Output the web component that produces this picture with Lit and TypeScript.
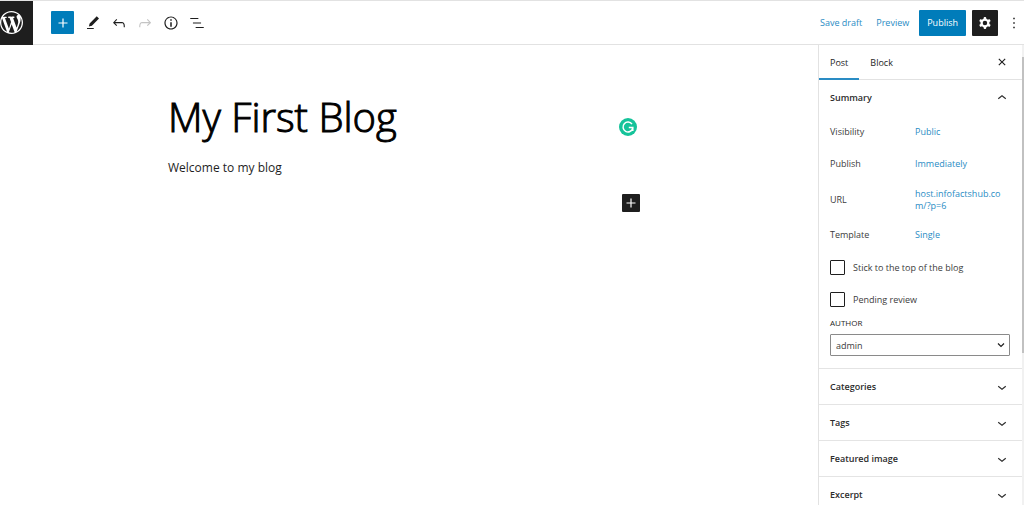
import { LitElement, html, css, svg } from "lit";
import { customElement, property, state } from "lit/decorators.js";

const ICONS: Record<string, string> = {
  plus: "M18 11.2h-5.2V6h-1.6v5.2H6v1.6h5.2V18h1.6v-5.2H18z",
  edit: "m20 6-3-3-9.500 9.500-1 4 4-1L20 6Zm-7 12.500H4V20h9v-1.500Z",
  undo: "M18.3 11.7c-.6-.6-1.4-.9-2.3-.9H6.7l2.900-3.300-1.100-1-4.500 5L8.5 16l1-1-2.700-2.700H16c.5 0 .9.2 1.3.5 1 1 1 3.400 1 4.500v.3h1.500v-.2c0-1.500 0-4.300-1.500-5.700z",
  redo: "M15.6 6.5l-1.100 1 2.900 3.300H8c-.9 0-1.700.3-2.300.9-1.400 1.500-1.400 4.200-1.400 5.600v.2h1.500v-.3c0-1.100 0-3.500 1-4.500.3-.3.7-.5 1.300-.5h9.200L14.5 15l1.100 1.100 4.600-4.600-4.600-5z",
  info: "M12 3.2c-4.800 0-8.800 3.900-8.800 8.800 0 4.800 3.900 8.800 8.800 8.800 4.800 0 8.800-3.900 8.800-8.800 0-4.800-4-8.800-8.800-8.800zm0 16c-4 0-7.200-3.300-7.200-7.200C4.8 8 8 4.8 12 4.8s7.200 3.300 7.200 7.200c0 4-3.200 7.200-7.200 7.200zM11 17h2v-6h-2v6zm0-8h2V7h-2v2z",
  list: "M13.8 5.2H3v1.500h10.800V5.2zm-3.600 12v1.500H21v-1.500H10.2zm7.200-6H6.600v1.500h10.800v-1.500z",
  cog: "M10.289 4.836A1 1 0 0111.275 4h1.306a1 1 0 01.987.836l.244 1.466c.787.26 1.503.679 2.108 1.218l1.393-.522a1 1 0 011.216.437l.653 1.13a1 1 0 01-.23 1.273l-1.148.944a6.025 6.025 0 010 2.435l1.149.946a1 1 0 01.23 1.272l-.653 1.13a1 1 0 01-1.216.437l-1.394-.522c-.605.54-1.32.958-2.108 1.218l-.244 1.466a1 1 0 01-.987.836h-1.306a1 1 0 01-.986-.836l-.244-1.466a5.995 5.995 0 01-2.108-1.218l-1.394.522a1 1 0 01-1.217-.436l-.653-1.131a1 1 0 01.23-1.272l1.149-.946a6.026 6.026 0 010-2.435l-1.148-.944a1 1 0 01-.23-1.272l.653-1.131a1 1 0 011.217-.437l1.393.522a5.994 5.994 0 012.108-1.218l.244-1.466zM14.929 12a3 3 0 11-6 0 3 3 0 016 0z",
  more: "M13 19h-2v-2h2v2zm0-6h-2v-2h2v2zm0-6h-2V5h2v2z",
  close: "M12 13.06l3.712 3.713 1.061-1.060L13.061 12l3.712-3.712-1.060-1.060L12 10.938 8.288 7.227l-1.061 1.060L10.939 12l-3.712 3.712 1.060 1.061L12 13.061z",
  up: "M6.5 12.4L12 8l5.500 4.400-.9 1.200L12 10l-4.500 3.600-1-1.200z",
  down: "M17.5 11.6L12 16l-5.500-4.400.9-1.200L12 14l4.500-3.600 1 1.200z",
};

const WORDPRESS =
  "M20 10c0-5.51-4.49-10-10-10C4.48 0 0 4.49 0 10c0 5.52 4.48 10 10 10 5.51 0 10-4.48 10-10zM7.78 15.37L4.37 6.22c.55-.02 1.17-.08 1.17-.08.5-.06.44-1.13-.06-1.11 0 0-1.45.11-2.37.11-.18 0-.37 0-.58-.01C4.12 2.69 6.87 1.11 10 1.11c2.33 0 4.45.87 6.05 2.34-.68-.11-1.65.39-1.65 1.58 0 .74.45 1.36.9 2.1.35.61.55 1.36.55 2.46 0 1.49-1.4 5-1.4 5l-3.03-8.37c.54-.02.82-.17.82-.17.5-.05.44-1.25-.06-1.22 0 0-1.44.12-2.38.12-.87 0-2.33-.12-2.33-.12-.5-.03-.56 1.2-.06 1.22l.92.08 1.26 3.41zM17.41 10c.24-.64.74-1.87.43-4.25.7 1.29 1.05 2.71 1.05 4.25 0 3.29-1.73 6.24-4.4 7.78.97-2.59 1.94-5.2 2.92-7.78zM6.1 18.09C3.12 16.65 1.11 13.53 1.11 10c0-1.3.23-2.48.72-3.59C3.25 10.3 4.67 14.2 6.1 18.09zm4.03-6.63l2.58 6.98c-.86.29-1.76.45-2.71.45-.79 0-1.57-.11-2.29-.33.81-2.38 1.62-4.74 2.42-7.1z";

const base = css`
  :host,
  * {
    box-sizing: border-box;
  }
  button,
  select,
  input {
    font: inherit;
    color: inherit;
    margin: 0;
  }
  button {
    padding: 0;
    border: 0;
    background: none;
    cursor: pointer;
  }
  a {
    color: #2a8cc4;
    text-decoration: none;
  }
  .icon {
    display: block;
    width: 18px;
    height: 18px;
    fill: currentColor;
    flex: none;
  }
`;

const icon = (name: string) => html`<svg class="icon" viewBox="0 0 24 24" aria-hidden="true">
  ${svg`<path fill-rule="evenodd" d=${ICONS[name]}></path>`}
</svg>`;

@customElement("editor-header")
class EditorHeader extends LitElement {
  static styles = [
    base,
    css`
      :host {
        display: flex;
        align-items: center;
        height: 45px;
        border-top: 1px solid #e2e2e2;
        border-bottom: 1px solid #e2e2e2;
        color: #1e1e1e;
      }
      .home {
        display: flex;
        align-items: center;
        width: 33px;
        height: 44px;
        background: #1e1e1e;
        color: #fff;
      }
      .logo {
        width: 23px;
        height: 23px;
        fill: currentColor;
      }
      .tools {
        display: flex;
        align-items: center;
        gap: 8px;
        padding-left: 18px;
      }
      .add {
        display: grid;
        place-items: center;
        width: 23px;
        height: 23px;
        margin-right: 2px;
        border-radius: 1px;
        background: #007cba;
        color: #fff;
      }
      .off {
        color: #c4c4c4;
      }
      .actions {
        display: flex;
        align-items: center;
        margin: 0 1px 0 auto;
      }
      .link {
        margin-right: 14px;
      }
      .publish {
        height: 26px;
        padding: 0 8px;
        border-radius: 1px;
        background: #007cba;
        color: #fff;
        font-weight: 500;
        margin-left: -4px;
      }
      .settings {
        display: grid;
        place-items: center;
        width: 26px;
        height: 26px;
        margin: 0 7px 0 6px;
        border-radius: 1px;
        background: #1e1e1e;
        color: #fff;
      }
    `,
  ];
  render() {
    return html`
      <a class="home" href="#" aria-label="View posts">
        <svg class="logo" viewBox="0 0 20 20" aria-hidden="true"><path d=${WORDPRESS}></path></svg>
      </a>
      <div class="tools">
        <button class="add" aria-label="Toggle block inserter">${icon("plus")}</button>
        <button aria-label="Tools">${icon("edit")}</button>
        <button aria-label="Undo">${icon("undo")}</button>
        <button class="off" aria-label="Redo" disabled>${icon("redo")}</button>
        <button aria-label="Details">${icon("info")}</button>
        <button aria-label="List view">${icon("list")}</button>
      </div>
      <div class="actions">
        <a class="link" href="#">Save draft</a>
        <a class="link" href="#">Preview</a>
        <button class="publish">Publish</button>
        <button class="settings" aria-label="Settings">${icon("cog")}</button>
        <button aria-label="Options">${icon("more")}</button>
      </div>
    `;
  }
}

@customElement("editor-canvas")
class EditorCanvas extends LitElement {
  static styles = [
    base,
    css`
      :host {
        display: flex;
        justify-content: center;
      }
      .page {
        width: 482px;
        max-width: 100%;
        padding: 45px 10px 0 0;
      }
      .row {
        display: flex;
        align-items: center;
        justify-content: space-between;
      }
      .title {
        margin: 0;
        font-size: 40px;
        line-height: 54px;
        font-weight: 300;
        -webkit-text-stroke: 1px #000;
        color: #000;
      }
      .badge {
        width: 18px;
        height: 18px;
        margin: 20px 3px 0 0;
      }
      .text {
        margin: 12px 0 0;
        font-size: 12px;
        line-height: 24px;
        color: #1e1e1e;
      }
      .insert {
        display: grid;
        place-items: center;
        width: 18px;
        height: 18px;
        margin: 14px 0 0 auto;
        border-radius: 1px;
        background: #1e1e1e;
        color: #fff;
      }
    `,
  ];
  render() {
    return html`
      <div class="page">
        <div class="row">
          <h1 class="title">My First Blog</h1>
          <svg class="badge" viewBox="0 0 18 18" aria-hidden="true">
            <circle cx="9" cy="9" r="9" fill="#15c39a"></circle>
            <path
              d="M13 6.200A4.900 4.900 0 1 0 13.700 10.200M9.800 9.600H13.800V13"
              fill="none"
              stroke="#fff"
              stroke-width="1.500"
            ></path>
          </svg>
        </div>
        <p class="text">Welcome to my blog</p>
        <button class="insert" aria-label="Add block">${icon("plus")}</button>
      </div>
    `;
  }
}

@customElement("settings-panel")
class SettingsPanel extends LitElement {
  @property() heading = "";
  @property({ type: Boolean, reflect: true }) open = false;
  static styles = [
    base,
    css`
      :host {
        display: block;
        border-bottom: 1px solid #e4e4e4;
      }
      .toggle {
        display: flex;
        align-items: center;
        justify-content: space-between;
        width: 100%;
        height: 35px;
        padding: 0 11px;
        font-weight: 600;
        color: #2c2c2c;
      }
      .body {
        padding: 1px 12px 12px 11px;
      }
    `,
  ];
  render() {
    return html`
      <button class="toggle" aria-expanded=${this.open} @click=${() => (this.open = !this.open)}>
        ${this.heading} ${icon(this.open ? "up" : "down")}
      </button>
      ${this.open ? html`<div class="body"><slot></slot></div>` : ""}
    `;
  }
}

@customElement("editor-sidebar")
class EditorSidebar extends LitElement {
  @state() private tab = "Post";
  static styles = [
    base,
    css`
      :host {
        display: flex;
        border-left: 1px solid #e2e2e2;
        color: #3c3c3c;
        overflow: hidden;
      }
      .content {
        flex: 1;
        min-width: 0;
      }
      .tabs {
        display: flex;
        height: 35px;
        border-bottom: 1px solid #e2e2e2;
        color: #1e1e1e;
      }
      .tab {
        height: 35px;
        padding: 1px 11px 0;
        font-weight: 500;
        border-bottom: 2px solid transparent;
      }
      .current {
        border-bottom-color: #2a8cc4;
      }
      .close {
        margin: 0 11px 0 auto;
      }
      .field {
        display: grid;
        grid-template-columns: 85px 88px;
        align-items: center;
        min-height: 32px;
        line-height: 12px;
      }
      .tall {
        min-height: 39px;
      }
      .value {
        overflow-wrap: anywhere;
      }
      .check {
        display: flex;
        align-items: center;
        gap: 8px;
        height: 32px;
      }
      .box {
        appearance: none;
        width: 15px;
        height: 15px;
        border: 1px solid #1e1e1e;
        border-radius: 1px;
        background: #fff;
      }
      .label {
        display: block;
        font-size: 8px;
        line-height: 12px;
        margin: 2px 0 5px;
        text-transform: uppercase;
        font-weight: 500;
        color: #1e1e1e;
      }
      .picker {
        display: grid;
        align-items: center;
      }
      .select,
      .caret {
        grid-area: 1 / 1;
      }
      .select {
        appearance: none;
        width: 100%;
        height: 22px;
        padding: 0 5px;
        border: 1px solid #8a8a8a;
        border-radius: 1px;
        background: #fff;
      }
      .caret {
        justify-self: end;
        width: 8px;
        height: 8px;
        margin-right: 5px;
        fill: none;
        stroke: #1e1e1e;
        stroke-width: 1.200;
        pointer-events: none;
      }
      .track {
        width: 2px;
        padding-top: 12px;
        background: #f1f1f1;
      }
      .thumb {
        height: 66%;
        background: #c1c1c1;
      }
    `,
  ];
  render() {
    const fields = [
      ["Visibility", "Public"],
      ["Publish", "Immediately"],
      ["URL", "host.infofactshub.com/?p=6"],
      ["Template", "Single"],
    ];
    return html`
      <div class="content">
        <div class="tabs">
          ${["Post", "Block"].map(
            (t) => html`<button
              class="tab ${this.tab === t ? "current" : ""}"
              @click=${() => (this.tab = t)}
            >
              ${t}
            </button>`
          )}
          <button class="close" aria-label="Close settings">${icon("close")}</button>
        </div>
        <settings-panel heading="Summary" open>
          ${fields.map(
            ([name, value]) => html`<div class="field ${name === "URL" ? "tall" : ""}">
              <span>${name}</span><a class="value" href="#">${value}</a>
            </div>`
          )}
          ${["Stick to the top of the blog", "Pending review"].map(
            (text) => html`<label class="check"><input class="box" type="checkbox" />${text}</label>`
          )}
          <label class="label" for="author">Author</label>
          <div class="picker">
            <select class="select" id="author">
              <option>admin</option>
            </select>
            <svg class="caret" viewBox="0 0 8 8" aria-hidden="true"><path d="M1 2.500 4 5.500 7 2.500"></path></svg>
          </div>
        </settings-panel>
        ${["Categories", "Tags", "Featured image", "Excerpt"].map(
          (name) => html`<settings-panel heading=${name}></settings-panel>`
        )}
      </div>
      <div class="track"><div class="thumb"></div></div>
    `;
  }
}

@customElement("app-root")
class AppRoot extends LitElement {
  static styles = css`
    :host {
      display: grid;
      grid-template: auto minmax(0, 1fr) / minmax(0, 1fr) 206px;
      height: 100vh;
      overflow: hidden;
      background: #fff;
      font-family: "Open Sans", "Noto Sans", sans-serif;
      font-size: 9px;
    }
    .header {
      grid-column: 1 / -1;
    }
  `;
  render() {
    return html`
      <editor-header class="header"></editor-header>
      <editor-canvas></editor-canvas>
      <editor-sidebar></editor-sidebar>
    `;
  }
}
